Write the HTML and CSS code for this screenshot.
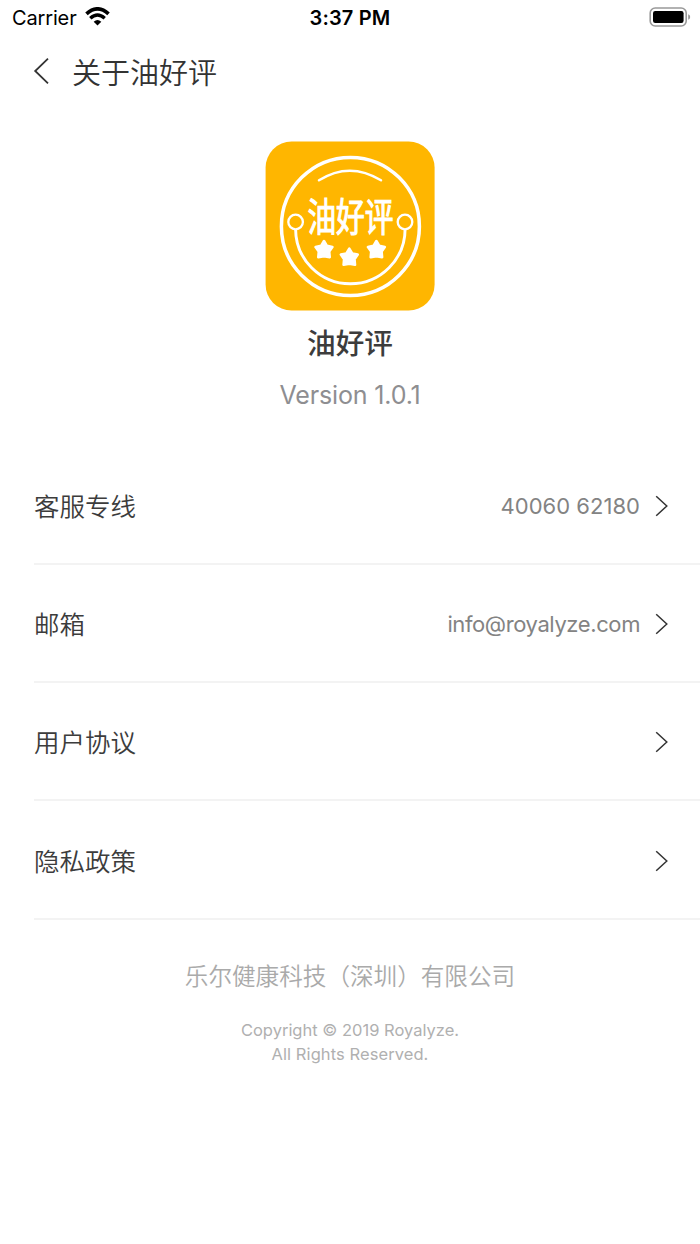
FILE: index.html
```html
<!DOCTYPE html>
<html lang="zh-CN">
<head>
<meta charset="utf-8">
<title>关于油好评</title>
<link rel="stylesheet" href="styles.css">
</head>
<body>
<div class="status-bar">
  <div class="status-left">
    <span class="carrier">Carrier</span>
    <svg class="wifi" width="25" height="19" viewBox="0 0 26 20" fill="none" stroke="#000">
      <path d="M1.4 7.3Q13-3.3 24.6 7.3" stroke-width="3.9"/>
      <path d="M5.4 11.8Q13 5 20.6 11.8" stroke-width="3.6"/>
      <path d="M13 19.6L9 15.4Q13 11.9 17 15.4Z" fill="#000" stroke="none"/>
    </svg>
  </div>
  <div class="clock">3:37 PM</div>
  <svg class="battery" width="42" height="20" viewBox="0 0 42 20">
    <rect x="1.2" y="1" width="36" height="18" rx="5" fill="#fff" stroke="#999" stroke-width="1.6"/>
    <rect x="4" y="4" width="30.6" height="12" rx="2.2"/>
    <path d="M39.2 7.2Q41.2 8 41.2 10T39.2 12.8Z" fill="#999"/>
  </svg>
</div>
<header class="nav">
  <svg class="back" width="16" height="28" viewBox="0 0 16 28" fill="none" stroke="#333" stroke-width="1.8"><path d="M15 1.7L2.2 14L15 26.3"/></svg>
  <h1 class="nav-title">关于油好评</h1>
</header>
<main>
  <section class="brand">
    <svg class="logo" width="170" height="170" viewBox="0 0 170 170">
      <rect x=".6" y=".6" width="169" height="169" rx="26" fill="#ffb600"/>
      <g fill="none" stroke="#fff">
        <circle cx="85.4" cy="85.4" r="69" stroke-width="3.5"/>
        <path d="M54 39.3Q84.5 20 116 39.3" stroke-width="2.5" stroke-linecap="round"/>
        <path d="M30.6 88A54.75 54.75 0 0 0 140.1 88" stroke-width="2.9"/>
        <circle cx="30.6" cy="81" r="7.3" fill="#ffb600" stroke-width="2.3"/>
        <circle cx="140" cy="81" r="7.3" fill="#ffb600" stroke-width="2.3"/>
      </g>
      <text class="logo-text" transform="translate(42.4 90) scale(1 1.34)">油好评</text>
      <g fill="#fff" stroke="#fff" stroke-width="2.6" stroke-linejoin="round">
        <path id="star" d="M59 100L61.9 104.8L67.4 106L64.2 110.6L64.7 116.2L59 115.2L53.3 116.2L53.8 110.6L50.6 106L56.1 104.8Z"/>
        <use href="#star" x="25.3" y="7.6"/>
        <use href="#star" x="52.4"/>
      </g>
    </svg>
    <h2 class="brand-name">油好评</h2>
    <p class="version">Version 1.0.1</p>
  </section>
  <ul class="list">
    <li class="row"><span class="label">客服专线</span><span class="value phone">40060 62180</span><svg class="chevron" width="14" height="22" viewBox="0 0 14 22"><path d="M1.2 1.2L11.8 11L1.2 20.8"/></svg></li>
    <li class="row"><span class="label">邮箱</span><span class="value email">info@royalyze.com</span><svg class="chevron" width="14" height="22" viewBox="0 0 14 22"><path d="M1.2 1.2L11.8 11L1.2 20.8"/></svg></li>
    <li class="row"><span class="label">用户协议</span><svg class="chevron" width="14" height="22" viewBox="0 0 14 22"><path d="M1.2 1.2L11.8 11L1.2 20.8"/></svg></li>
    <li class="row"><span class="label">隐私政策</span><svg class="chevron" width="14" height="22" viewBox="0 0 14 22"><path d="M1.2 1.2L11.8 11L1.2 20.8"/></svg></li>
  </ul>
</main>
<footer class="footer">
  <p class="company">乐尔健康科技（深圳）有限公司</p>
  <p class="copyright">Copyright © 2019 Royalyze.</p>
  <p class="copyright rights">All Rights Reserved.</p>
</footer>
</body>
</html>
```
FILE: styles.css
```css
* { box-sizing: border-box; margin: 0; padding: 0; }
body {
  min-height: 1244px;
  background: #fff;
  color: #3c3c3c;
  font-family: Inter, "Noto Sans CJK SC", sans-serif;
}
svg { display: block; flex: none; }

.status-bar {
  display: grid;
  grid-template-columns: 1fr auto 1fr;
  align-items: center;
  height: 36px;
  padding: 0 9px 0 12px;
  color: #000;
}
.status-left { display: flex; align-items: center; gap: 8px; }
.carrier { font-size: 20px; letter-spacing: -0.15px; }
.wifi { margin-top: -3px; }
.clock { margin: 0 3px 0 0; font-size: 20px; font-weight: 600; letter-spacing: 0.15px; }
.battery { justify-self: end; margin-top: -2px; }

.nav { display: flex; align-items: center; height: 70px; padding-left: 33px; }
.nav-title {
  margin: -1px 0 0 23px;
  font: 350 29px/40px "Noto Sans CJK SC", sans-serif;
  color: #333;
}

.brand { display: flex; flex-direction: column; align-items: center; padding-top: 35px; }
.logo-text { font: 400 28.7px "Noto Sans CJK SC", sans-serif; fill: #fff; stroke: #fff; stroke-width: 0.8px; }
.brand-name {
  margin-top: 11px;
  font: 500 28.6px/40px "Noto Sans CJK SC", sans-serif;
}
.version { margin-top: 16px; font-size: 25px; line-height: 34px; letter-spacing: -0.15px; color: #8e8e91; }

.list { margin-top: 34.5px; padding-left: 34px; list-style: none; }
.row {
  display: flex;
  align-items: center;
  height: 118.3px;
  padding: 2px 31px 0 0;
  border-bottom: 2px solid #f3f3f3;
}
.label { margin: -2px auto 0 0; font: 350 25.5px/36px "Noto Sans CJK SC", sans-serif; }
.value { margin-right: 15px; font-size: 22px; color: #838383; }
.phone { letter-spacing: 0.03px; }
.email { letter-spacing: -0.4px; }
.chevron { fill: none; stroke: #333; stroke-width: 1.5; }

.footer { padding-top: 37.5px; text-align: center; color: #aaa; }
.company { font: 350 23.6px/36px "Noto Sans CJK SC", sans-serif; }
.copyright { margin-top: 25px; font-size: 16.5px; line-height: 24px; letter-spacing: 0; color: #b0b0b0; }
.rights { margin-top: 0; letter-spacing: 0.08px; }
```
